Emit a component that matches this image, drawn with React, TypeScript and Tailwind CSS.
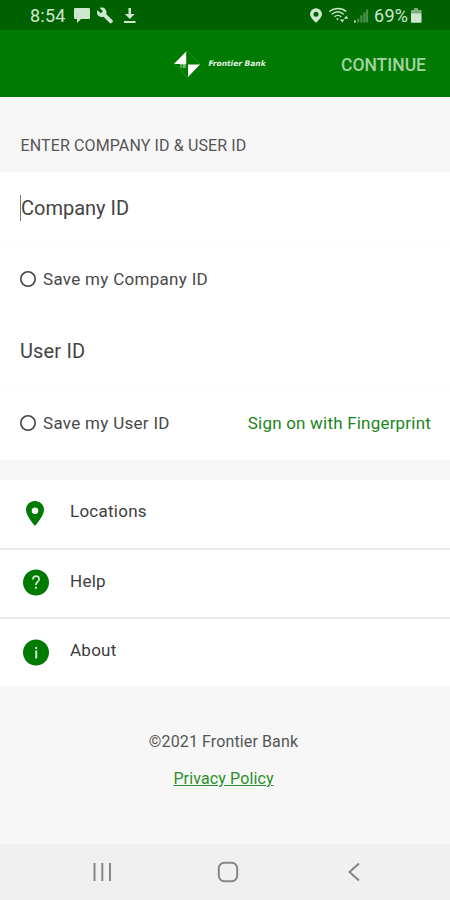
import { type JSX, type ReactNode } from "react";

interface SaveOptionProps {
	label: string;
	children?: ReactNode;
}

interface MenuItemProps {
	label: string;
	icon: JSX.Element;
	last?: boolean;
}

function StatusBar(): JSX.Element {
	return (
		<div className="flex h-[30px] shrink-0 items-center bg-[#006100] pl-[30px] pr-[28px] text-[#cfe6cf]">
			<span className="w-[44px] whitespace-nowrap pt-[2px] text-[18px] leading-[28px] tracking-[0.2px]">8:54</span>
			<svg className="h-[30px] w-[64px]" viewBox="74 0 64 30" fill="currentColor">
				<path d="M75 8h14a1 1 0 0 1 1 1v9a1 1 0 0 1-1 1h-8l-4 4v-4h-2a1 1 0 0 1-1-1V9a1 1 0 0 1 1-1z" />
				<g transform="translate(96.3 6.8) scale(.73)">
					<path d="M22.7 19l-9.1-9.1c.9-2.3.4-5-1.5-6.9-2-2-5-2.4-7.4-1.3L9 6 6 9 1.6 4.7C.4 7.1.9 10.1 2.9 12.1c1.9 1.9 4.6 2.4 6.900 1.500l9.100 9.100c.4.4 1 .4 1.400 0l2.300-2.300c.5-.4.5-1.100.1-1.400z" />
				</g>
				<path d="M128.500 8h2.500v6h3.800l-5 5-5-5h3.700zM124 21h11.500v2H124z" />
			</svg>
			<div className="ml-auto flex items-center">
				<svg className="h-[30px] w-[62px]" viewBox="309 0 62 30" fill="none" stroke="currentColor">
					<path
						fill="currentColor"
						stroke="none"
						fillRule="evenodd"
						d="M316 8.200a6 6 0 0 0-6 6c0 3.500 6 8.600 6 8.600s6-5.100 6-8.600a6 6 0 0 0-6-6zm0 3.500a2.500 2.500 0 1 1 0 5 2.500 2.500 0 0 1 0-5z"
					/>
					<path strokeWidth="1.400" d="M329.300 11.500c5-4 12.200-4 17 0M331.800 14.200c3.700-3 8.400-3 12 0M334.300 16.800c2.300-1.800 4.800-1.800 7 0" />
					<path fill="currentColor" stroke="none" d="M336 18.600h3l-1.500 1.900zM340 19.500h4.400l-2.200 3zM344 18.800l2.200-3 2.200 3z" />
					<path fill="currentColor" stroke="none" d="M354 20.500h1.800v2H354z" />
					<path strokeWidth="2.200" opacity=".35" d="M358.200 22.500v-4M361.400 22.500v-7M364.400 22.500v-10M367 22.500V9.500" />
				</svg>
				<span className="w-[40px] whitespace-nowrap pl-[3px] pt-[2px] text-[18px] leading-[28px] tracking-[0.3px]">69%</span>
				<svg className="h-[30px] w-[11px]" viewBox="411 0 11 30" fill="currentColor">
					<path opacity=".6" d="M414 8h4v2h3.500v4h-10.500v-4h3z" />
					<path d="M411 13.500h10.500V22a.8.8 0 0 1-.8.800h-9a.8.8 0 0 1-.7-.8z" />
				</svg>
			</div>
		</div>
	);
}

function Header(): JSX.Element {
	return (
		<header className="flex h-[67px] shrink-0 items-center bg-[#007a00] pl-[173px] pr-[24px]">
			<svg className="h-[28px] w-[28px]" viewBox="0 0 28 28">
				<path d="M14 1L27 14 14 27 1 14z" fill="none" stroke="#2f9130" strokeWidth=".7" />
				<path d="M13.200 1.500V14H1zM15 14.500h12L15 27z" fill="#fff" />
				<text x="7" y="18" fontSize="5" fontWeight="700" fill="#b5d9b5" fontFamily="Roboto, sans-serif">FB</text>
			</svg>
			<span className="ml-[7.500px] whitespace-nowrap font-['DejaVu_Sans',sans-serif] text-[7.500px] font-bold italic text-[#e2f2e2]">
				Frontier Bank
			</span>
			<button className="ml-auto pt-[3px] text-[17.5px] font-medium text-[#a4d3a4]">CONTINUE</button>
		</header>
	);
}

function SaveOption({ label, children }: SaveOptionProps): JSX.Element {
	return (
		<div className="flex h-[72px] items-center pl-[20px] pr-[19px] text-[17px]">
			<svg className="mb-[2px] h-[16px] w-[16px]" viewBox="0 0 16 16">
				<circle cx="8" cy="8" r="7.200" fill="none" stroke="#444" strokeWidth="1.600" />
			</svg>
			<span className="ml-[7px] tracking-[0.3px] text-[#484848]">{label}</span>
			{children}
		</div>
	);
}

function MenuItem({ label, icon, last = false }: MenuItemProps): JSX.Element {
	return (
		<div className={`flex items-center pl-[22px] ${last ? "h-[67px]" : "h-[69.500px] border-b-2 border-[#e9e9e9]"}`}>
			{icon}
			<span className="ml-[20px] pb-[4px] text-[17px] tracking-[0.25px] text-[#3d3d3d]">{label}</span>
		</div>
	);
}

export default function App(): JSX.Element {
	return (
		<div className="flex h-[900px] w-[450px] flex-col overflow-hidden bg-[#f7f7f7] font-[Roboto,sans-serif]">
			<StatusBar />
			<Header />

			<h1 className="h-[75px] shrink-0 pl-[20.500px] pt-[37px] text-[16px] leading-[24px] tracking-[0.12px] text-[#555]">
				ENTER COMPANY ID &amp; USER ID
			</h1>

			{/* Credentials */}
			<section className="shrink-0 bg-white">
				<div className="flex h-[72px] items-center border-b border-[#fcfcfc] pl-[20px] text-[20px] text-[#444]">
					<span className="h-[26px] w-px bg-[#777]" />
					<span>Company ID</span>
				</div>
				<SaveOption label="Save my Company ID" />
				<div className="flex h-[72px] items-center border-b border-[#fbfbfb] pb-[2px] pl-[20px] text-[20px] tracking-[0.15px] text-[#444]">
					User ID
				</div>
				<SaveOption label="Save my User ID">
					<a className="ml-auto tracking-[0.2px] text-[#1d851d]">Sign on with Fingerprint</a>
				</SaveOption>
			</section>

			{/* Menu */}
			<nav className="mt-[20px] shrink-0 bg-white">
				<MenuItem
					label="Locations"
					icon={
						<svg className="h-[28px] w-[28px]" viewBox="0 0 28 28">
							<path
								fill="#007a00"
								fillRule="evenodd"
								d="M13 1C8 1 4 4.900 4 9.800 4 16 13 26 13 26s9-10 9-16.200C22 4.900 18 1 13 1zm0 6.500a3.300 3.300 0 1 1 0 6.600 3.300 3.300 0 0 1 0-6.600z"
							/>
						</svg>
					}
				/>
				<MenuItem
					label="Help"
					icon={
						<svg className="h-[28px] w-[28px]" viewBox="0 0 28 28">
							<circle cx="14" cy="13.500" r="13" fill="#007a00" />
							<path d="M10.900 10.500c0-4.500 6.200-4.500 6.200-.4 0 2.700-3.200 2.900-3.200 5.900" fill="none" stroke="#cde6cd" strokeWidth="1.800" />
							<path d="M12.900 17.700h2v2.100h-2z" fill="#cde6cd" />
						</svg>
					}
				/>
				<MenuItem
					label="About"
					last
					icon={
						<svg className="h-[28px] w-[28px]" viewBox="0 0 28 28">
							<circle cx="14" cy="13.500" r="13" fill="#007a00" />
							<path d="M13.200 8h2v2h-2zM13.200 11.500h2v8h-2z" fill="#cde6cd" />
						</svg>
					}
				/>
			</nav>

			<footer className="flex flex-1 flex-col items-center pr-[3px] pt-[44px] text-[16px] leading-[24px] tracking-[0.12px]">
				<p className="text-[#555]">©2021 Frontier Bank</p>
				<a className="mt-[13px] text-[#2a8f2a] underline">Privacy Policy</a>
			</footer>

			{/* Device navigation */}
			<div className="h-[56px] shrink-0 bg-[#f0f0f0]">
				<svg className="h-[56px] w-[450px]" viewBox="0 0 450 56" fill="none" stroke="#858585" strokeWidth="2">
					<path d="M94.500 19v18M102.300 19v18M110 19v18" />
					<rect x="218.800" y="18.800" width="18.400" height="18.400" rx="5.500" />
					<path d="M359 19.500l-9.500 8.500 9.500 8.500" />
				</svg>
			</div>
		</div>
	);
}
